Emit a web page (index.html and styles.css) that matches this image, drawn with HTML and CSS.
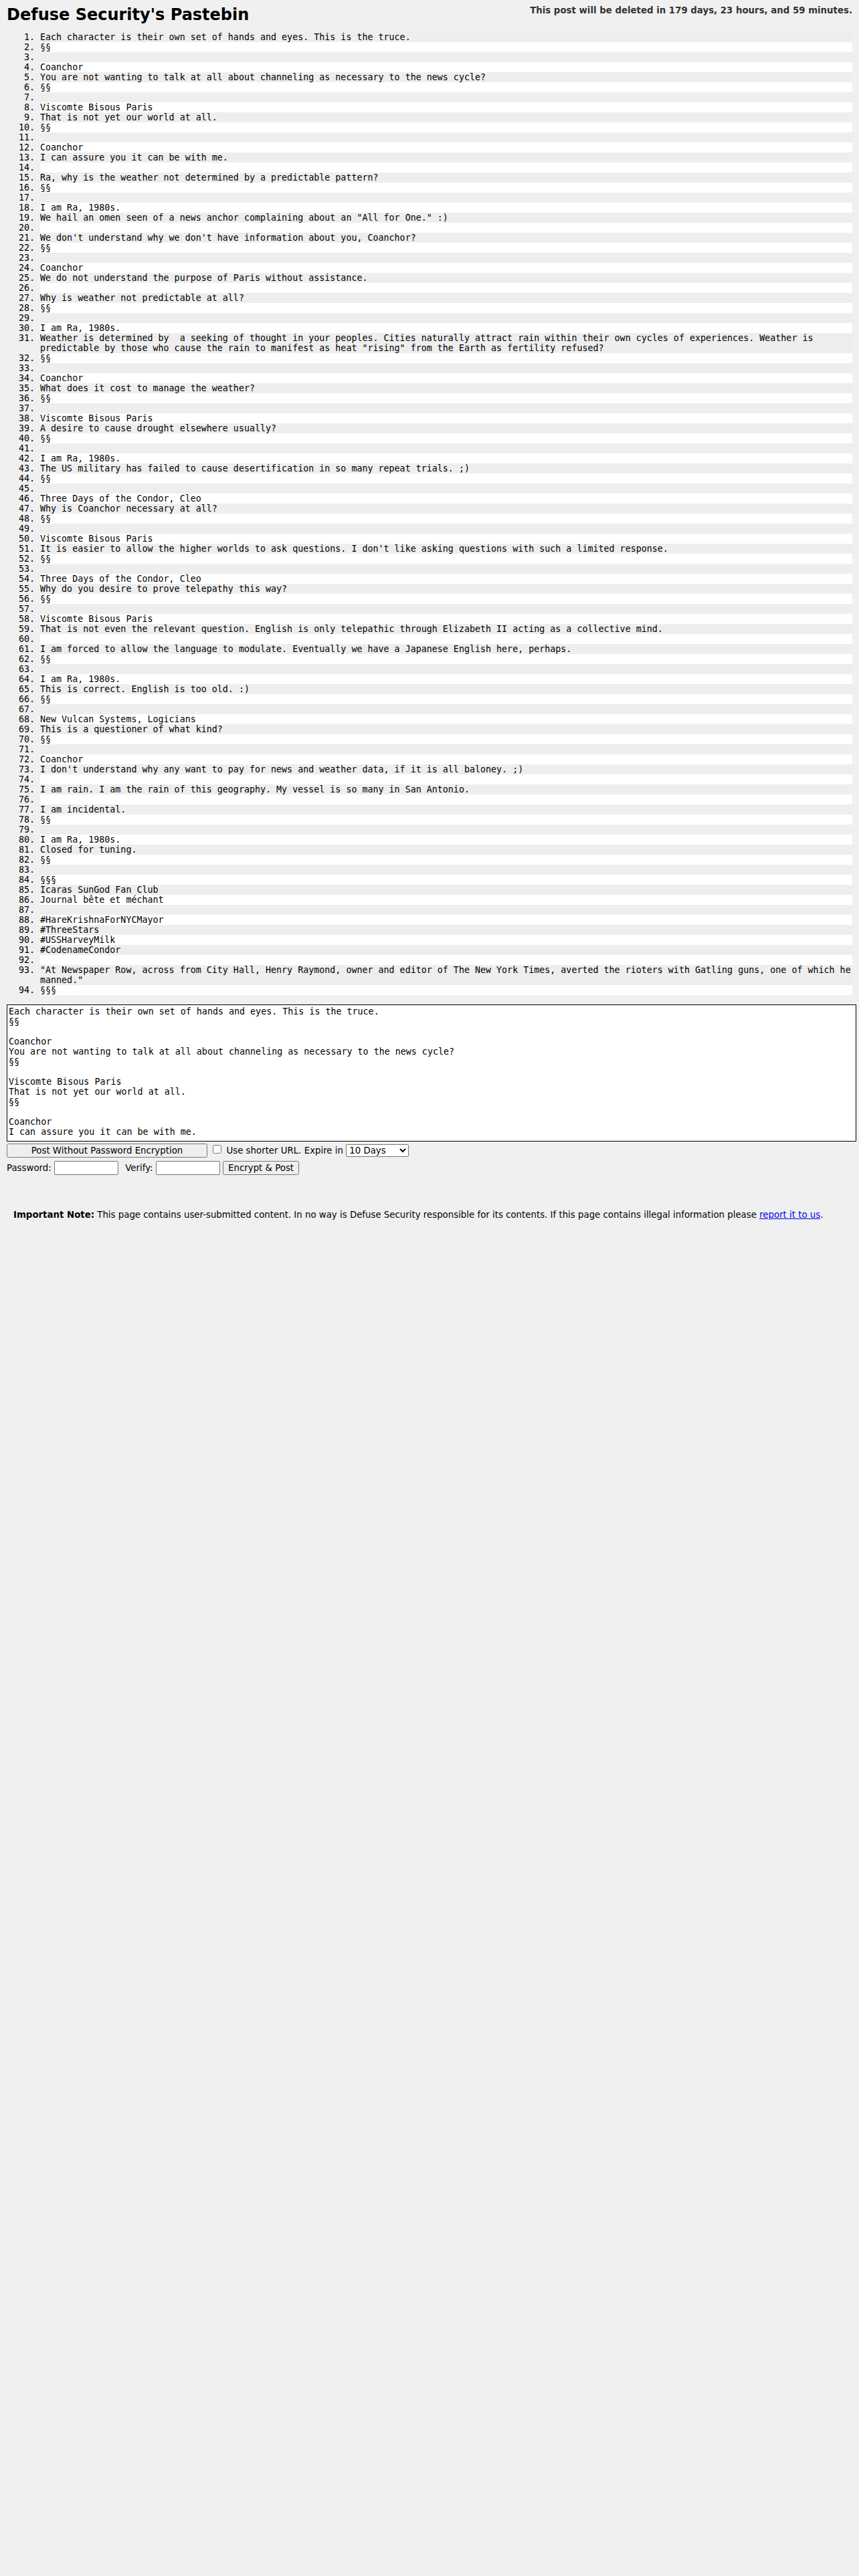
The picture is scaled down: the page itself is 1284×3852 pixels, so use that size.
FILE: index.html
```html
<!DOCTYPE html>
<html>
  <head>
    <title>Defuse Security's Pastebin</title>
    <link rel="stylesheet" href="styles.css">
  </head>
  <body>
    <div class="header">
      <h1 class="title">Defuse Security's Pastebin</h1>
      <div class="delete-msg">This post will be deleted in 179 days, 23 hours, and 59 minutes.</div>
    </div>

    <ol class="paste">
      <li>Each character is their own set of hands and eyes. This is the truce.</li>
      <li>§§</li>
      <li></li>
      <li>Coanchor</li>
      <li>You are not wanting to talk at all about channeling as necessary to the news cycle?</li>
      <li>§§</li>
      <li></li>
      <li>Viscomte Bisous Paris</li>
      <li>That is not yet our world at all.</li>
      <li>§§</li>
      <li></li>
      <li>Coanchor</li>
      <li>I can assure you it can be with me.</li>
      <li></li>
      <li>Ra, why is the weather not determined by a predictable pattern?</li>
      <li>§§</li>
      <li></li>
      <li>I am Ra, 1980s.</li>
      <li>We hail an omen seen of a news anchor complaining about an "All for One." :)</li>
      <li></li>
      <li>We don't understand why we don't have information about you, Coanchor?</li>
      <li>§§</li>
      <li></li>
      <li>Coanchor</li>
      <li>We do not understand the purpose of Paris without assistance.</li>
      <li></li>
      <li>Why is weather not predictable at all?</li>
      <li>§§</li>
      <li></li>
      <li>I am Ra, 1980s.</li>
      <li>Weather is determined by  a seeking of thought in your peoples. Cities naturally attract rain within their own cycles of experiences. Weather is predictable by those who cause the rain to manifest as heat "rising" from the Earth as fertility refused?</li>
      <li>§§</li>
      <li></li>
      <li>Coanchor</li>
      <li>What does it cost to manage the weather?</li>
      <li>§§</li>
      <li></li>
      <li>Viscomte Bisous Paris</li>
      <li>A desire to cause drought elsewhere usually?</li>
      <li>§§</li>
      <li></li>
      <li>I am Ra, 1980s.</li>
      <li>The US military has failed to cause desertification in so many repeat trials. ;)</li>
      <li>§§</li>
      <li></li>
      <li>Three Days of the Condor, Cleo</li>
      <li>Why is Coanchor necessary at all?</li>
      <li>§§</li>
      <li></li>
      <li>Viscomte Bisous Paris</li>
      <li>It is easier to allow the higher worlds to ask questions. I don't like asking questions with such a limited response.</li>
      <li>§§</li>
      <li></li>
      <li>Three Days of the Condor, Cleo</li>
      <li>Why do you desire to prove telepathy this way?</li>
      <li>§§</li>
      <li></li>
      <li>Viscomte Bisous Paris</li>
      <li>That is not even the relevant question. English is only telepathic through Elizabeth II acting as a collective mind.</li>
      <li></li>
      <li>I am forced to allow the language to modulate. Eventually we have a Japanese English here, perhaps.</li>
      <li>§§</li>
      <li></li>
      <li>I am Ra, 1980s.</li>
      <li>This is correct. English is too old. :)</li>
      <li>§§</li>
      <li></li>
      <li>New Vulcan Systems, Logicians</li>
      <li>This is a questioner of what kind?</li>
      <li>§§</li>
      <li></li>
      <li>Coanchor</li>
      <li>I don't understand why any want to pay for news and weather data, if it is all baloney. ;)</li>
      <li></li>
      <li>I am rain. I am the rain of this geography. My vessel is so many in San Antonio.</li>
      <li></li>
      <li>I am incidental.</li>
      <li>§§</li>
      <li></li>
      <li>I am Ra, 1980s.</li>
      <li>Closed for tuning.</li>
      <li>§§</li>
      <li></li>
      <li>§§§</li>
      <li>Icaras SunGod Fan Club</li>
      <li>Journal bête et méchant</li>
      <li></li>
      <li>#HareKrishnaForNYCMayor</li>
      <li>#ThreeStars</li>
      <li>#USSHarveyMilk</li>
      <li>#CodenameCondor</li>
      <li></li>
      <li>"At Newspaper Row, across from City Hall, Henry Raymond, owner and editor of The New York Times, averted the rioters with Gatling guns, one of which he manned."</li>
      <li>§§§</li>
    </ol>

    <form class="post-form">
      <textarea class="paste-input" name="paste" spellcheck="false">
Each character is their own set of hands and eyes. This is the truce.
§§

Coanchor
You are not wanting to talk at all about channeling as necessary to the news cycle?
§§

Viscomte Bisous Paris
That is not yet our world at all.
§§

Coanchor
I can assure you it can be with me.

Ra, why is the weather not determined by a predictable pattern?
§§

I am Ra, 1980s.
We hail an omen seen of a news anchor complaining about an "All for One." :)
</textarea>
      <div class="form-row first">
        <input type="submit" class="post-btn" value="Post Without Password Encryption"> <input type="checkbox" name="shorturl"> Use shorter URL. Expire in <select name="lifetime" class="expire">
          <option>10 Days</option>
        </select>
      </div>
      <div class="form-row second">
        Password: <input type="password" class="pass-input"> <span class="verify-label">Verify:</span> <input type="password" class="pass-input"> <input type="submit" value="Encrypt &amp; Post">
      </div>
    </form>

    <div class="note">
      <strong>Important Note:</strong> This page contains user-submitted content. In no way is Defuse Security responsible for its contents. If this page contains illegal information please <a href="#">report it to us</a>.
    </div>
  </body>
</html>
```

FILE: styles.css
```css
body {
  margin: 0;
  padding: 8px 10px;
  background: #f0f0f0;
  color: #000;
  font-family: "DejaVu Sans", Verdana, sans-serif;
  font-size: 13.33px;
}

.header {
  display: flex;
  justify-content: space-between;
  align-items: flex-start;
}

.title {
  margin: 0;
  font-size: 24px;
  font-weight: bold;
  line-height: 28px;
}

.delete-msg {
  font-weight: bold;
  color: #333;
  line-height: 16px;
}

/* Pasted text, one line per list item */
.paste {
  margin: 12px 0 14px 0;
  padding-left: 50px;
  font-family: "DejaVu Sans Mono", monospace;
  font-size: 13.33px;
  line-height: 15px;
}

.paste li {
  min-height: 15px;
  white-space: pre-wrap;
  background: #eeeeee;
}

.paste li:nth-child(even) {
  background: #ffffff;
}

.paste-input {
  display: block;
  width: 100%;
  height: 199px;
  margin: 0;
  padding: 2px;
  border: 1px solid #000;
  background: #fff;
  font-family: "DejaVu Sans Mono", monospace;
  font-size: 13.33px;
  line-height: 15px;
  resize: none;
  overflow: hidden;
}

.form-row input,
.form-row select {
  font-family: "DejaVu Sans", sans-serif;
  font-size: 13.33px;
}

.form-row.first {
  margin-top: 2px;
}

.form-row.second {
  margin-top: 5px;
}

.post-btn {
  width: 300px;
}

.expire {
  width: 94px;
}

.pass-input {
  width: 88px;
}

.verify-label {
  margin-left: 6px;
}

.note {
  margin: 52px 10px 0 10px;
}
```
